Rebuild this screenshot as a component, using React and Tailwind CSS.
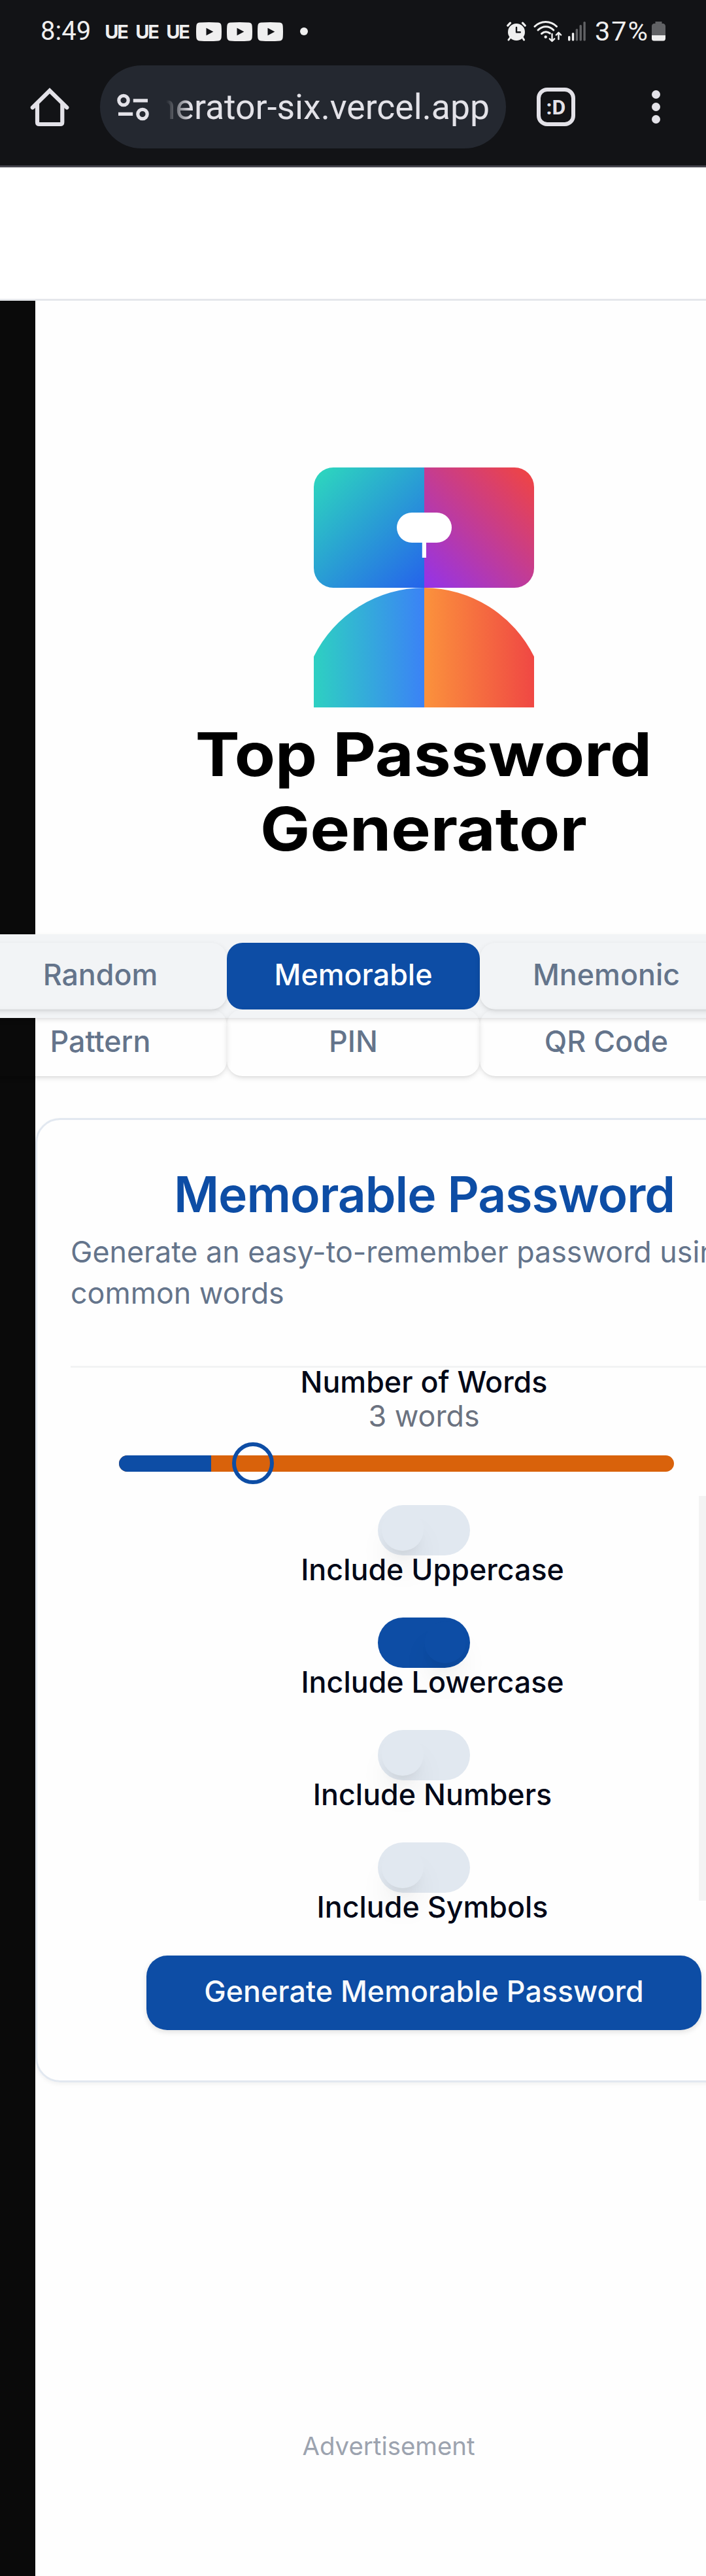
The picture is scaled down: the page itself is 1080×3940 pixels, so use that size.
import React from "react";

const tabs = ["Random", "Memorable", "Mnemonic", "Pattern", "PIN", "QR Code"];

const options = [
  { label: "Include Uppercase", on: false },
  { label: "Include Lowercase", on: true },
  { label: "Include Numbers", on: false },
  { label: "Include Symbols", on: false },
];

const signalBars = [
  { x: 0, y: 22, on: true },
  { x: 5.85, y: 17, on: true },
  { x: 11.7, y: 11, on: false },
  { x: 17.55, y: 5, on: false },
  { x: 23.4, y: 0, on: false },
];

function PlayBadge() {
  return (
    <svg className="h-[29px] w-[39px]" viewBox="0 0 39 29">
      <path
        d="M5 .6Q19.500-.4 34 .6Q38.500 1 38.700 6Q39.300 14.500 38.700 23Q38.500 28 34 28.400Q19.500 29.400 5 28.400Q.5 28 .3 23Q-.3 14.500 .3 6Q.5 1 5 .6Z"
        fill="#efefef"
      />
      <path d="M15.500 8.800V20.200L26.300 14.500Z" fill="#121316" />
    </svg>
  );
}

function AlarmIcon() {
  return (
    <svg className="h-[30px] w-[30px]" viewBox="0 0 30 30">
      <g stroke="#efefef" strokeLinecap="round" fill="none">
        <path d="M1.800 6.200L5.500 2.200M28.200 6.200L24.500 2.200" strokeWidth="3.200" />
        <path d="M5.500 24.500L3 28M24.500 24.500L26.500 28" strokeWidth="3" />
      </g>
      <circle cx="15" cy="16" r="13" fill="#efefef" />
      <path d="M15 9V16.200H20.800" stroke="#121316" strokeWidth="2.400" strokeLinecap="round" strokeLinejoin="round" fill="none" />
    </svg>
  );
}

function WifiIcon() {
  return (
    <svg className="h-[34px] w-[44px]" viewBox="814 31 44 34" fill="none" stroke="#efefef" strokeLinecap="round">
      <path d="M816 40.500C825 31 840.500 31 849.500 40.500" strokeWidth="3" />
      <path d="M821 46C828 39 838 39 844.800 46" strokeWidth="3" />
      <path d="M826.500 51.500C830.500 48 835.500 48 839.300 51" strokeWidth="3" />
      <circle cx="832.700" cy="56.500" r="2.200" fill="#efefef" stroke="none" />
      <path d="M842.500 52V62.500M838.800 59.300L842.500 63L846.200 59.300M852.500 60V50M848.800 53.500L852.500 49.800L856.200 53.500" strokeWidth="2.400" strokeLinejoin="round" />
    </svg>
  );
}

function SignalIcon() {
  return (
    <svg className="h-[30px] w-[27px]" viewBox="0 0 27 30">
      {signalBars.map((b) => (
        <rect key={b.x} x={b.x} y={b.y} width="3.400" height={29.5 - b.y} rx="1.600" fill={b.on ? "#efefef" : "#616265"} />
      ))}
    </svg>
  );
}

function BatteryIcon() {
  return (
    <svg className="h-[30px] w-[21px]" viewBox="0 0 21 30">
      <path d="M5.500 0H15.500V3H18Q21 4 21 7V21H0V7Q0 4 3 3H5.500Z" fill="#616265" />
      <path d="M0 21H21V26Q21 29.500 17.500 29.500H3.500Q0 29.500 0 26Z" fill="#efefef" />
    </svg>
  );
}

function HomeIcon() {
  return (
    <svg className="h-[60px] w-[60px]" viewBox="46.500 133.500 60 60" fill="none" stroke="#e3e2e8" strokeWidth="6.200">
      <path d="M50.300 164L76.500 138.200L102.800 164" strokeLinecap="round" />
      <path d="M57.500 158V186.500Q57.500 189.500 60.500 189.500H92.800Q95.800 189.500 95.800 186.500V158" />
    </svg>
  );
}

function TuneIcon() {
  return (
    <svg className="h-[42px] w-[50px]" viewBox="179 142.500 50 42" fill="none" stroke="#e3e2e8" strokeWidth="5.200">
      <circle cx="189" cy="153" r="7.200" />
      <path d="M203.800 153.300H226M181 173.800H203.200" />
      <circle cx="218" cy="174" r="7.200" />
    </svg>
  );
}

function Logo() {
  return (
    <svg className="block h-[367px] w-[337px]" viewBox="0 0 337 367">
      <defs>
        <linearGradient id="topLeft" gradientUnits="userSpaceOnUse" x1="0" y1="0" x2="176" y2="176">
          <stop offset="0.050" stopColor="#2dd4bf" />
          <stop offset="1" stopColor="#2563eb" />
        </linearGradient>
        <linearGradient id="topRight" gradientUnits="userSpaceOnUse" x1="165" y1="180" x2="335" y2="10">
          <stop offset="0" stopColor="#9333ea" />
          <stop offset="1" stopColor="#ef4444" />
        </linearGradient>
        <linearGradient id="bodyLeft" gradientUnits="userSpaceOnUse" x1="-8" y1="0" x2="169" y2="0">
          <stop offset="0" stopColor="#2dd4bf" />
          <stop offset="1" stopColor="#3b82f6" />
        </linearGradient>
        <linearGradient id="bodyRight" gradientUnits="userSpaceOnUse" x1="169" y1="0" x2="345" y2="0">
          <stop offset="0" stopColor="#fb923c" />
          <stop offset="1" stopColor="#ef4444" />
        </linearGradient>
      </defs>
      <path d="M30 0H169V184H30A30 30 0 0 1 0 154V30A30 30 0 0 1 30 0Z" fill="url(#topLeft)" />
      <path d="M169 0H307A30 30 0 0 1 337 30V154A30 30 0 0 1 307 184H169Z" fill="url(#topRight)" />
      <path d="M0 289.300A188.500 188.500 0 0 1 169 184V367H0Z" fill="url(#bodyLeft)" />
      <path d="M169 184A188.500 188.500 0 0 1 337 289.300V367H169Z" fill="url(#bodyRight)" />
      <rect x="127" y="69" width="84" height="46" rx="23" fill="#fff" />
      <rect x="165.800" y="113" width="6.200" height="25" fill="#fff" />
    </svg>
  );
}

function BrowserChrome() {
  return (
    <header className="h-[256px] border-b-[3px] border-[#46464f] bg-[#121316] font-[Roboto,sans-serif]">
      <div className="flex h-[96px] items-center justify-between pl-[62px] pr-[62px] text-[40px] leading-none text-[#efefef]">
        <div className="flex items-center">
          <span>8:49</span>
          <div className="ml-[21px] flex font-[Inter,sans-serif] text-[29px] font-bold tracking-[-2px]">
            <span className="w-[47px]">UE</span>
            <span className="w-[47px]">UE</span>
            <span className="w-[46px]">UE</span>
          </div>
          <div className="flex gap-2">
            <PlayBadge />
            <PlayBadge />
            <PlayBadge />
          </div>
          <div className="ml-[26px] size-3 rounded-full bg-[#efefef]" />
        </div>
        <div className="flex items-center">
          <AlarmIcon />
          <div className="ml-[11px] mr-[9px]">
            <WifiIcon />
          </div>
          <SignalIcon />
          <span className="ml-[14px] mr-[4px] text-[41.500px] tracking-[2px]">37%</span>
          <BatteryIcon />
        </div>
      </div>
      <div className="flex h-[135px] items-center pl-[46px] text-[#e3e2e8]">
        <HomeIcon />
        <div className="ml-[47px] flex h-[127px] w-[621px] items-center rounded-full bg-[#242830] pl-[26px]">
          <TuneIcon />
          <div className="ml-[25px] flex w-[495px] justify-end overflow-hidden text-[53.500px] leading-[70px] whitespace-nowrap [mask-image:linear-gradient(to_right,transparent,black_38px)]">
            generator-six.vercel.app
          </div>
        </div>
        <div className="ml-[47px] flex size-[59px] items-center justify-center rounded-[16px] border-[6.500px] border-[#e3e2e8] text-[32px] leading-none font-bold">
          :D
        </div>
        <div className="ml-[117px] flex flex-col gap-[6px]">
          <div className="size-[13px] rounded-full bg-[#e3e2e8]" />
          <div className="size-[13px] rounded-full bg-[#e3e2e8]" />
          <div className="size-[13px] rounded-full bg-[#e3e2e8]" />
        </div>
      </div>
    </header>
  );
}

function TabBar() {
  return (
    <div className="-ml-[107px] grid h-[128px] w-[1187px] auto-rows-[102px] grid-cols-3 bg-[#f2f4f6] p-[13px] shadow-[0_3px_8px_rgba(0,0,0,0.08),0_3px_5px_-3px_rgba(0,0,0,0.1)]">
      {tabs.map((t) => (
        <button
          key={t}
          className={
            t === "Memorable"
              ? "rounded-[24px] bg-[#0d4da5] pb-[3px] font-medium text-white"
              : "rounded-[24px] pb-[3px] font-medium text-[#64748b] shadow-[0_3px_8px_rgba(0,0,0,0.1),0_3px_5px_-3px_rgba(0,0,0,0.1)]"
          }
        >
          {t}
        </button>
      ))}
    </div>
  );
}

function Switch({ on }) {
  return (
    <div className={on ? "flex h-[77px] w-[141px] justify-end rounded-full bg-[#0d4da5] p-[6px]" : "flex h-[77px] w-[141px] rounded-full bg-[#e1e8f0] p-[6px]"}>
      <div
        className={
          on
            ? "size-[64px] rounded-full bg-[#0d4da5] shadow-[0_32px_48px_-10px_rgba(0,0,0,0.1),0_13px_19px_-13px_rgba(0,0,0,0.1)]"
            : "size-[64px] rounded-full bg-[#e1e8f0] shadow-[0_32px_48px_-10px_rgba(0,0,0,0.1),0_13px_19px_-13px_rgba(0,0,0,0.1)]"
        }
      />
    </div>
  );
}

function MemorableCard() {
  return (
    <section className="mt-[153px] h-[1475px] w-[1244px] rounded-[38px] border-[3px] border-[#e2e8f0] shadow-[0_3px_6px_rgba(0,0,0,0.05)]">
      <h2 className="mr-[54px] mt-[76px] text-center text-[75px] leading-[75px] font-semibold tracking-[-1px] text-[#0d4da5]">
        Memorable Password
      </h2>
      <p className="ml-[51px] mt-[20px] w-[1080px] leading-[63px] text-[#64748b]">
        Generate an easy-to-remember password using common words
      </p>
      <div className="ml-[51px] mt-[79px] border-t-[3px] border-[#f2f3f4]" />
      <div className="flex w-[1183px] flex-col items-center">
        <div className="leading-[44px] font-medium text-[#020817]">Number of Words</div>
        <div className="mt-1 leading-[53px] text-[#6b7280]">3 words</div>
        <div className="relative mt-[13px] flex h-[64px] w-[849px] items-center self-start ml-[125px]">
          <div className="h-[25px] w-full overflow-hidden rounded-full bg-[#d9620b]">
            <div className="h-full w-[141px] bg-[#0d4da5]" />
          </div>
          <div className="absolute left-[173px] top-0 size-[64px] rounded-full border-[6px] border-[#0d4da5]" />
        </div>
        <div className="mt-[32px]">
          {options.map((o) => (
            <div key={o.label} className="flex h-[172px] flex-col items-center">
              <Switch on={o.on} />
              <div className="relative left-[13px] leading-[44px] font-medium text-[#020817]">{o.label}</div>
            </div>
          ))}
        </div>
        <button className="mt-px h-[114px] w-[849px] rounded-[32px] bg-[#0d4da5] pb-[2px] font-medium text-[#f8fafc] shadow-[0_3px_8px_rgba(0,0,0,0.12)]">
          Generate Memorable Password
        </button>
      </div>
    </section>
  );
}

export default function App() {
  return (
    <div className="relative h-[3940px] w-[1080px] overflow-hidden bg-white font-[Inter,sans-serif] text-[44.800px]">
      <BrowserChrome />
      <div className="h-[204px] border-b-[3px] border-[#e5e7eb] bg-white" />
      <main className="h-[3480px] border-l-[54px] border-[#0a0a0a] bg-[#fefefe]">
        <div className="flex h-[969px] w-[1188px] flex-col items-center pt-[255px]">
          <Logo />
          <h1 className="mt-[15px] scale-x-[1.105] text-center text-[92px] leading-[114px] font-bold text-black">
            Top Password
            <br />
            Generator
          </h1>
        </div>
        <TabBar />
        <MemorableCard />
        <p className="mt-[528px] w-[1081px] text-center text-[38.400px] leading-[56px] text-[#9ca3af]">Advertisement</p>
      </main>
      <div className="absolute right-0 top-[2288px] h-[619px] w-[11px] bg-[#f3f3f3]" />
    </div>
  );
}
